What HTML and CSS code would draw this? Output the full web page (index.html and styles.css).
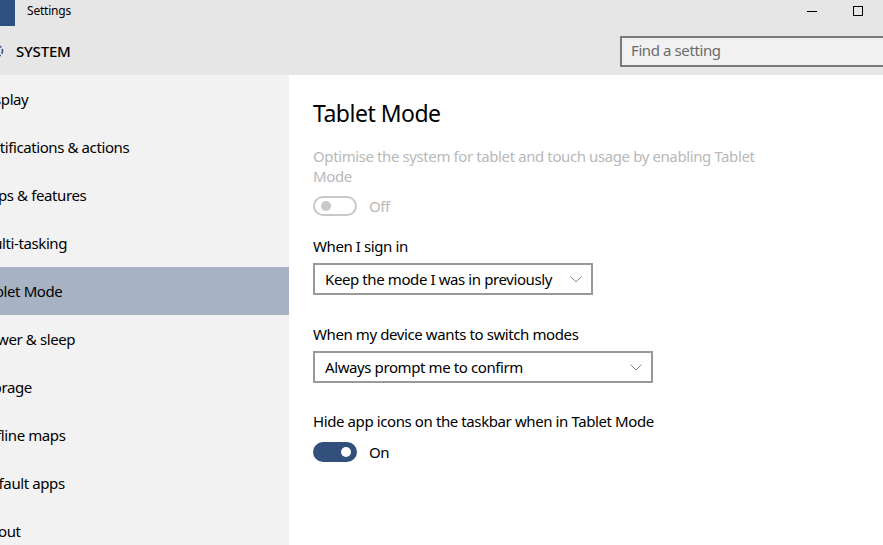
FILE: index.html
```html
<!DOCTYPE html>
<html>
<head>
<meta charset="utf-8">
<link rel="stylesheet" href="styles.css">
</head>
<body>
<div class="window">
  <header class="top">
    <div class="titlebar">
      <div class="appicon"></div>
      <div class="title">Settings</div>
      <div class="caption">
        <span class="btn-min"></span>
        <span class="btn-max"></span>
      </div>
    </div>
    <div class="headrow">
      <div class="section">
        <svg class="gear" width="16" height="16" viewBox="0 0 16 16"><circle cx="8" cy="8" r="5.5" fill="none" stroke="#2d5080" stroke-width="1.5" stroke-dasharray="3 1.5"/><circle cx="8" cy="8" r="2.5" fill="none" stroke="#2d5080" stroke-width="1.2"/></svg>
        <span class="section-name">SYSTEM</span>
      </div>
      <div class="search">Find a setting</div>
    </div>
  </header>
  <div class="body">
    <nav class="sidebar">
      <div class="item"><span>Display</span></div>
      <div class="item"><span>Notifications &amp; actions</span></div>
      <div class="item"><span>Apps &amp; features</span></div>
      <div class="item"><span>Multi-tasking</span></div>
      <div class="item selected"><span>Tablet Mode</span></div>
      <div class="item"><span>Power &amp; sleep</span></div>
      <div class="item"><span>Storage</span></div>
      <div class="item"><span>Offline maps</span></div>
      <div class="item"><span>Default apps</span></div>
      <div class="item"><span>About</span></div>
    </nav>
    <main class="content">
      <h1 class="page-title">Tablet Mode</h1>
      <p class="desc">Optimise the system for tablet and touch usage by enabling Tablet Mode</p>
      <div class="toggle-row">
        <span class="toggle off"><span class="knob"></span></span>
        <span class="toggle-label disabled">Off</span>
      </div>
      <div class="label first">When I sign in</div>
      <div class="select w1">
        <span>Keep the mode I was in previously</span>
        <svg class="chev" width="12" height="7" viewBox="0 0 12 7"><path d="M0.5 0.5 L6 6 L11.5 0.5" fill="none" stroke="#888" stroke-width="1"/></svg>
      </div>
      <div class="label second">When my device wants to switch modes</div>
      <div class="select w2">
        <span>Always prompt me to confirm</span>
        <svg class="chev" width="12" height="7" viewBox="0 0 12 7"><path d="M0.5 0.5 L6 6 L11.5 0.5" fill="none" stroke="#888" stroke-width="1"/></svg>
      </div>
      <div class="label">Hide app icons on the taskbar when in Tablet Mode</div>
      <div class="toggle-row on-row">
        <span class="toggle on"><span class="knob"></span></span>
        <span class="toggle-label">On</span>
      </div>
    </main>
  </div>
</div>
</body>
</html>
```
FILE: styles.css
```css
* { box-sizing: border-box; }
html, body { margin: 0; padding: 0; }
body {
  width: 883px;
  height: 545px;
  overflow: hidden;
  font-family: "Noto Sans", "Open Sans", sans-serif;
  font-size: 15px;
  letter-spacing: -0.4px;
  color: #000;
  background: #fff;
}
.window { width: 883px; height: 545px; display: flex; flex-direction: column; }
.top { background: #e6e6e6; height: 75px; flex: none; }
.titlebar { height: 27px; display: flex; align-items: flex-start; }
.appicon { width: 15px; height: 26px; background: #2d5080; flex: none; }
.title { font-size: 12px; margin-left: 12px; line-height: 22px; color: #000; letter-spacing: -0.2px; }
.caption { margin-left: auto; display: flex; align-items: flex-start; height: 27px; }
.btn-min { width: 10px; height: 1px; background: #000; margin-top: 11px; margin-right: 36px; }
.btn-max { width: 10px; height: 10px; border: 1px solid #000; margin-top: 6px; margin-right: 20px; }
.headrow { height: 48px; display: flex; align-items: center; }
.section { display: flex; align-items: center; }
.gear { margin-left: -11px; margin-right: 11px; }
.section-name { font-size: 15px; font-weight: 500; letter-spacing: -0.2px; }
.search {
  margin-left: auto;
  width: 280px;
  margin-right: -17px;
  height: 31px;
  border: 2px solid #7a7a7a;
  background: #f1f1f1;
  color: #6b6b6b;
  padding-left: 9px;
  line-height: 25px;
  font-size: 15px;
  margin-top: 0;
}
.body { flex: 1; display: flex; min-height: 0; }
.sidebar { width: 289px; flex: none; background: #f2f2f2; overflow: hidden; }
.item { height: 48px; display: flex; align-items: center; white-space: nowrap; }
.item span { margin-left: -20px; }
.item.selected { background: #a7b3c4; }
.content { flex: 1; padding-left: 24px; padding-top: 23px; }
.page-title { font-size: 23px; font-weight: 400; margin: 0; line-height: 30px; letter-spacing: -0.5px; }
.desc { margin: 18px 0 0 0; width: 460px; color: #b8b8b8; line-height: 20px; }
.toggle-row { display: flex; align-items: center; margin-top: 10px; height: 20px; }
.toggle {
  width: 44px; height: 20px; border-radius: 10px; position: relative; flex: none;
}
.toggle.off { border: 2px solid #c8c8c8; }
.toggle.off .knob { position: absolute; width: 10px; height: 10px; border-radius: 50%; background: #c8c8c8; left: 6px; top: 3px; }
.toggle.on { background: #33507c; }
.toggle.on .knob { position: absolute; width: 10px; height: 10px; border-radius: 50%; background: #fff; left: 28px; top: 5px; }
.toggle-label { margin-left: 12px; }
.toggle-label.disabled { color: #b8b8b8; }
.label { margin-top: 28px; line-height: 20px; }
.label.first { margin-top: 20px; }
.label.second { margin-top: 29px; }
.select {
  margin-top: 7px;
  height: 32px;
  border: 2px solid #999;
  display: flex;
  align-items: center;
  padding-left: 10px;
  padding-right: 9px;
}
.select span { flex: 1; }
.w1 { width: 280px; }
.w2 { width: 340px; }
.chev { flex: none; }
.on-row { margin-top: 11px; }
```
